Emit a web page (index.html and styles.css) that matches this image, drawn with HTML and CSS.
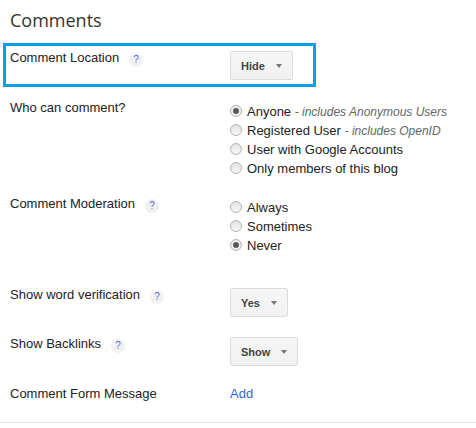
FILE: index.html
```html
<!DOCTYPE html>
<html lang="en">
<head>
<meta charset="utf-8">
<title>Comments</title>
<link rel="stylesheet" href="styles.css">
</head>
<body>
<div class="panel">
  <h1 class="title">Comments</h1>
  <div class="rows">
    <div class="row row-highlight">
      <div class="label"><span>Comment Location</span><span class="help">?</span></div>
      <div class="control"><button class="menu-btn" type="button">Hide<span class="caret"></span></button></div>
    </div>
    <div class="row">
      <div class="label"><span>Who can comment?</span></div>
      <div class="control">
        <div class="options">
          <div class="option"><span class="radio checked"></span><span>Anyone <span class="hint">- includes Anonymous Users</span></span></div>
          <div class="option"><span class="radio"></span><span>Registered User <span class="hint">- includes OpenID</span></span></div>
          <div class="option"><span class="radio"></span><span>User with Google Accounts</span></div>
          <div class="option"><span class="radio"></span><span>Only members of this blog</span></div>
        </div>
      </div>
    </div>
    <div class="row row-moderation">
      <div class="label"><span>Comment Moderation</span><span class="help">?</span></div>
      <div class="control">
        <div class="options options-mod">
          <div class="option"><span class="radio"></span><span>Always</span></div>
          <div class="option"><span class="radio"></span><span>Sometimes</span></div>
          <div class="option"><span class="radio checked"></span><span>Never</span></div>
        </div>
      </div>
    </div>
    <div class="row">
      <div class="label"><span>Show word verification</span><span class="help">?</span></div>
      <div class="control"><button class="menu-btn" type="button">Yes<span class="caret"></span></button></div>
    </div>
    <div class="row">
      <div class="label"><span>Show Backlinks</span><span class="help">?</span></div>
      <div class="control"><button class="menu-btn" type="button">Show<span class="caret"></span></button></div>
    </div>
    <div class="row row-last">
      <div class="label"><span>Comment Form Message</span></div>
      <div class="control"><a class="link" href="#">Add</a></div>
    </div>
  </div>
</div>
</body>
</html>
```

FILE: styles.css
```css
html, body {
  margin: 0;
  background: #fff;
}

body {
  font-family: "Liberation Sans", Arial, sans-serif;
  font-size: 13px;
  color: #222;
}

.panel {
  padding: 8px 0 16px 6px;
  border-bottom: 1px solid #e5e5e5;
}

.title {
  margin: 0 0 14px 4px;
  font-family: "Open Sans", "Liberation Sans", sans-serif;
  font-size: 18px;
  line-height: 24px;
  font-weight: normal;
  color: #333;
}

.rows {
  display: flex;
  flex-direction: column;
  gap: 11px;
}

.row {
  display: grid;
  grid-template-columns: 220px auto;
  padding: 4px 0 4px 4px;
  line-height: 16px;
}

.row-highlight {
  width: 307px;
  box-sizing: border-box;
  outline: 3px solid #00a3e8;
  margin-bottom: 1px;
}

.row-moderation {
  margin-bottom: 14px;
}

.row-last {
  margin-top: 1px;
}

.label {
  display: flex;
  align-items: flex-start;
  white-space: nowrap;
}

.help {
  flex: none;
  width: 14px;
  height: 14px;
  margin: 3px 0 0 10px;
  border-radius: 50%;
  background: #f1f1f1;
  color: #5a6fdc;
  font-size: 10px;
  line-height: 14px;
  text-align: center;
}

.control {
  display: flex;
  align-items: flex-start;
}

.menu-btn {
  display: inline-flex;
  align-items: center;
  gap: 11px;
  box-sizing: border-box;
  height: 29px;
  margin: 1px 0 0;
  padding: 0 10px;
  border: 1px solid #dcdcdc;
  border-radius: 2px;
  background: linear-gradient(#f6f6f6, #f1f1f1);
  font-family: "Liberation Sans", Arial, sans-serif;
  font-size: 11px;
  font-weight: bold;
  color: #444;
}

.caret {
  width: 0;
  height: 0;
  border-left: 3.5px solid transparent;
  border-right: 3.5px solid transparent;
  border-top: 4px solid #777;
}

.options {
  margin: 2px 0 -1px;
  line-height: 19px;
}

.options-mod {
  margin-top: 2px;
}

.option {
  display: flex;
  align-items: flex-start;
  height: 19px;
  white-space: nowrap;
}

.radio {
  flex: none;
  box-sizing: border-box;
  width: 12px;
  height: 12px;
  margin: 3px 5px 0 0;
  border: 1px solid #b4b4b4;
  border-radius: 50%;
  background: linear-gradient(#e2e2e2, #f8f8f8);
}

.radio.checked {
  background: radial-gradient(circle, #555 0, #555 2px, #8c8c8c 3px, #f4f4f4 3.6px, #e2e2e2 100%);
}

.hint {
  font-size: 12px;
  line-height: 1;
  font-style: italic;
  color: #666;
}

.link {
  color: #3366cc;
  text-decoration: none;
}
```
